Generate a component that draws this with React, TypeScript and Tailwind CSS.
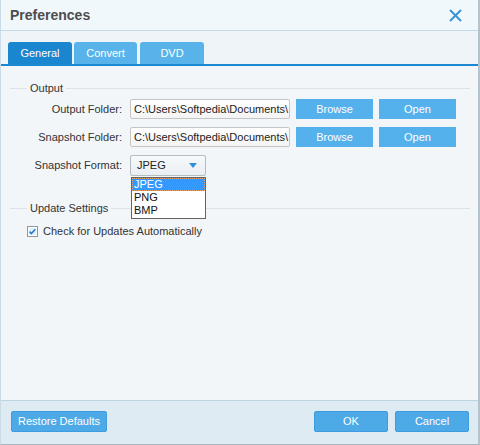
import React from "react";

const font = { fontFamily: '"Liberation Sans", Arial, sans-serif' };

function SectionHeader({ title }: { title: string }) {
  return (
    <div className="flex items-center h-[16px]">
      <div className="w-[17px] h-px bg-[#dbe2e8]" />
      <span className="px-[3px] text-[11px] text-[#333]">{title}</span>
      <div className="flex-1 h-px bg-[#dbe2e8]" />
    </div>
  );
}

function BlueBtn({ children, w }: { children: React.ReactNode; w: string }) {
  return (
    <div className={`${w} h-[20px] bg-[#55b1ec] text-white text-[11px] flex items-center justify-center`}>
      {children}
    </div>
  );
}

function FolderRow({ label }: { label: string }) {
  return (
    <div className="flex items-center h-[20px]">
      <div className="w-[113px] text-right text-[11px] text-[#333] pr-[1px]">{label}</div>
      <div className="ml-[7px] w-[160px] h-[20px] border border-[#c5c5c5] rounded-[2px] bg-gradient-to-b from-[#ffffff] to-[#f4f4f4] overflow-hidden whitespace-nowrap text-[11px] text-[#222] flex items-center pl-[3px]">
        C:\Users\Softpedia\Documents\
      </div>
      <div className="ml-[6px]">
        <BlueBtn w="w-[77px]">Browse</BlueBtn>
      </div>
      <div className="ml-[6px]">
        <BlueBtn w="w-[77px]">Open</BlueBtn>
      </div>
    </div>
  );
}

export default function App() {
  return (
    <div
      style={font}
      className="w-[480px] h-[445px] flex flex-col border-l border-l-[#c9dbe6] border-r-2 border-r-[#b4c3cc] border-b border-b-[#a9b6be] bg-[#eef4f8] overflow-hidden"
    >
      {/* Title bar */}
      <div className="h-[31px] shrink-0 bg-[#f1f8fc] border-b border-[#c3dae6] flex items-center justify-between pl-[9px] pr-[16px]">
        <span className="text-[14px] font-bold text-[#4d4d4d]">Preferences</span>
        <svg width="13" height="13" viewBox="0 0 13 13">
          <path d="M1 1 L12 12 M12 1 L1 12" stroke="#3a94d2" strokeWidth="2" />
        </svg>
      </div>

      {/* Tabs */}
      <div className="shrink-0 pt-[11px] pl-[7px] flex items-end border-b-2 border-[#1a87d0] bg-[#eff4f8]">
        <div className="w-[64px] h-[22px] rounded-t-[3px] bg-[#1a86cf] text-white text-[11px] flex items-center justify-center">
          General
        </div>
        <div className="ml-[2px] w-[63px] h-[22px] rounded-t-[3px] bg-[#58b3ea] text-white text-[11px] flex items-center justify-center">
          Convert
        </div>
        <div className="ml-[3px] w-[64px] h-[22px] rounded-t-[3px] bg-[#58b3ea] text-white text-[11px] flex items-center justify-center">
          DVD
        </div>
      </div>

      {/* Content */}
      <div className="flex-1 bg-[#f2f6f9] pt-[14px] pl-[9px] pr-[8px] relative">
        <SectionHeader title="Output" />
        <div className="mt-[3px] flex flex-col gap-[8px]">
          <FolderRow label="Output Folder:" />
          <FolderRow label="Snapshot Folder:" />
          <div className="flex items-center h-[21px]">
            <div className="w-[113px] text-right text-[11px] text-[#333] pr-[1px]">Snapshot Format:</div>
            <div className="ml-[7px] relative">
              <div className="w-[76px] h-[21px] border border-[#b4bcc4] rounded-[2px] bg-gradient-to-b from-[#f7f9fb] to-[#e9eef2] flex items-center justify-between pl-[6px] pr-[8px] text-[11px] text-[#222]">
                <span>JPEG</span>
                <svg width="8" height="5" viewBox="0 0 8 5">
                  <path d="M0 0 L8 0 L4 5 Z" fill="#2f8fd6" />
                </svg>
              </div>
              <div className="absolute left-[1px] top-[22px] w-[75px] h-[42px] bg-white border border-[#646464] z-10 text-[11px] text-[#111] leading-[13px]">
                <div className="h-[13px] bg-[#3399ff] text-white pl-[2px] outline-1 outline-dotted outline-[#e8a060] -outline-offset-1">JPEG</div>
                <div className="h-[13px] pl-[2px]">PNG</div>
                <div className="h-[13px] pl-[2px]">BMP</div>
              </div>
            </div>
          </div>
        </div>

        <div className="mt-[24px]">
          <SectionHeader title="Update Settings" />
        </div>
        <div className="mt-[8px] ml-[17px] flex items-center h-[14px]">
          <svg width="11" height="11" viewBox="0 0 11 11">
            <rect x="0.5" y="0.5" width="10" height="10" fill="#ffffff" stroke="#8c9aa6" />
            <rect x="2" y="2" width="7" height="7" fill="#e6f1fa" />
            <path d="M2.6 5.6 L4.4 7.5 L8.3 3.2" stroke="#1e7fd0" strokeWidth="1.6" fill="none" />
          </svg>
          <span className="ml-[5px] text-[11px] text-[#333]">Check for Updates Automatically</span>
        </div>
      </div>

      {/* Footer */}
      <div className="h-[44px] shrink-0 bg-[#deebf2] border-t border-[#bcd3e0] flex items-start pt-[10px] pl-[10px] pr-[9px]">
        <div className="w-[96px] h-[21px] bg-[#4ea9e7] border border-[#3d9be0] rounded-[2px] text-white text-[11px] flex items-center justify-center">
          Restore Defaults
        </div>
        <div className="flex-1" />
        <div className="w-[74px] h-[21px] bg-[#4ea9e7] border border-[#3d9be0] rounded-[2px] text-white text-[11px] flex items-center justify-center">
          OK
        </div>
        <div className="ml-[7px] w-[74px] h-[21px] bg-[#4ea9e7] border border-[#3d9be0] rounded-[2px] text-white text-[11px] flex items-center justify-center">
          Cancel
        </div>
      </div>
    </div>
  );
}
